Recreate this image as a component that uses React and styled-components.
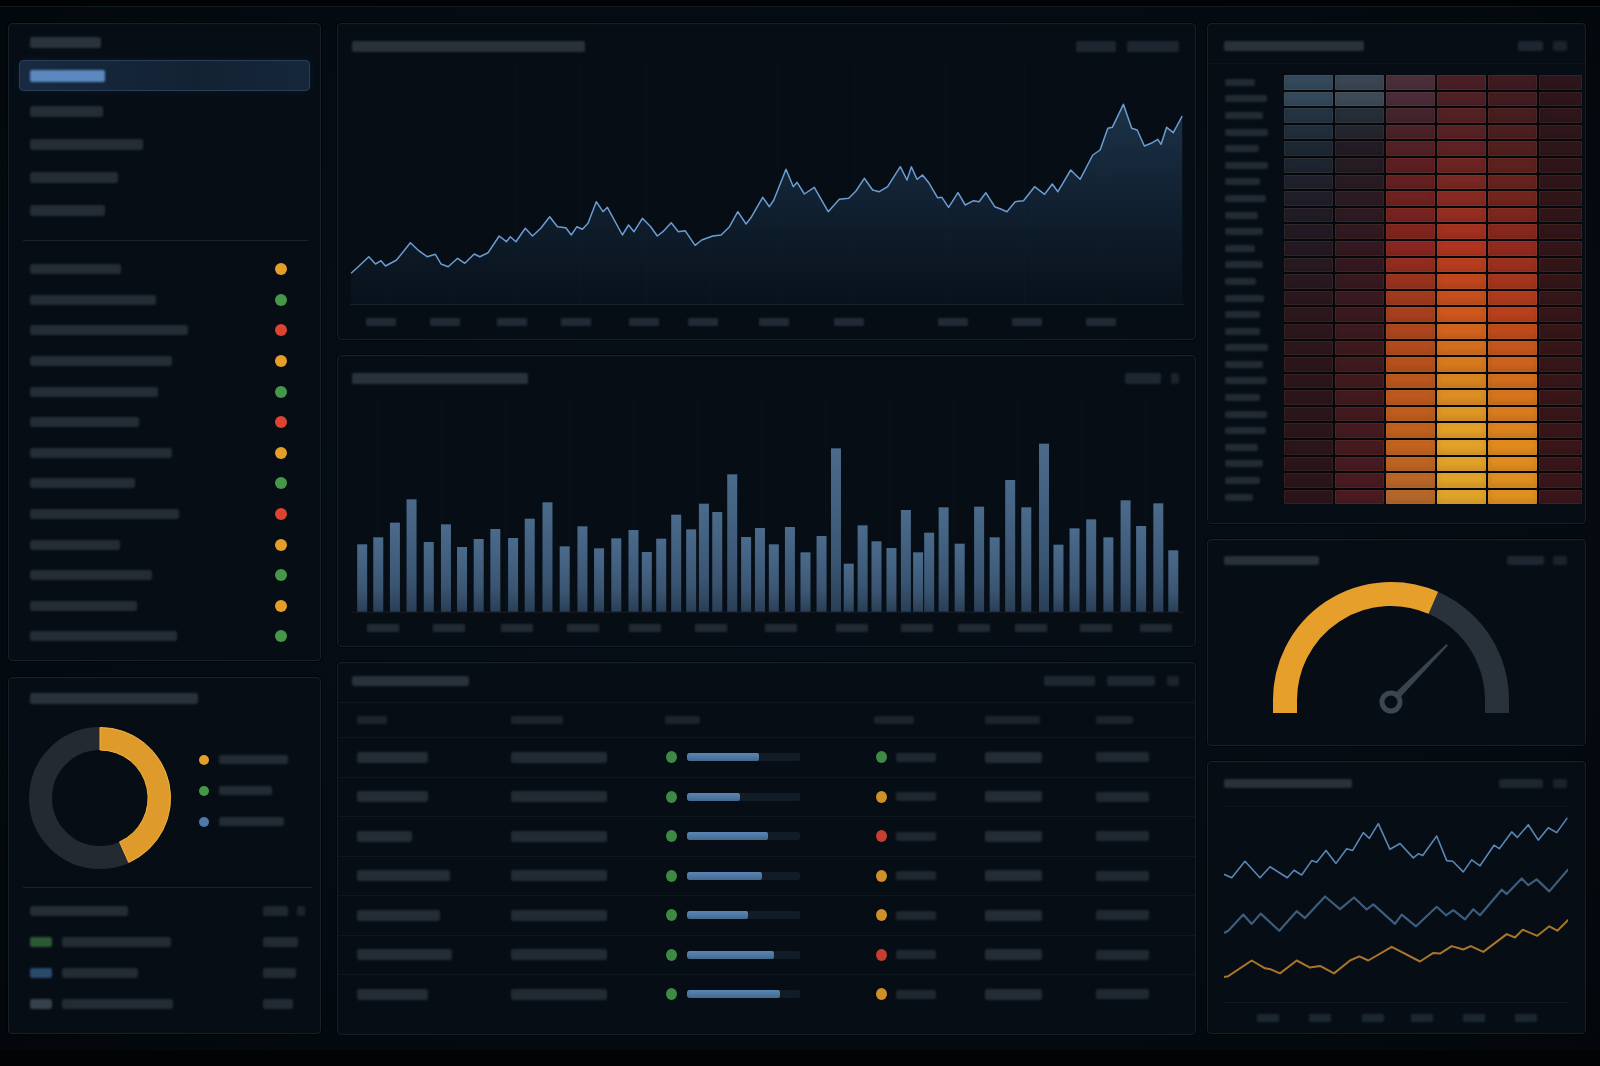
import React from "react";
import styled, { createGlobalStyle } from "styled-components";

const GlobalStyle = createGlobalStyle`
  * { box-sizing: border-box; }
  html, body { margin: 0; padding: 0; background: #010204; }
  body { font-family: "Liberation Sans", Arial, sans-serif; }
`;

// ---------- data ----------

const NAV = [73, 113, 88, 75];
const STATUS_ROWS = [
  [91, "o"], [126, "g"], [158, "r"], [142, "o"], [128, "g"], [109, "r"], [142, "o"],
  [105, "g"], [149, "r"], [90, "o"], [122, "g"], [107, "o"], [147, "g"],
];
const DOT = { o: "#e59f29", g: "#45984a", r: "#dc4432", b: "#4f78a8" };

// line chart points, sampled from the reference (chart units)
const LINE = [
  [38,790],[50,772],[70,740],[82,762],[92,752],[100,768],[120,750],[145,698],[160,722],[175,740],
  [190,733],[200,762],[213,770],[230,745],[243,760],[260,732],[270,740],[285,728],[305,678],[318,695],
  [325,680],[335,695],[352,655],[365,678],[380,655],[396,620],[410,650],[425,653],[435,675],[445,650],
  [455,658],[465,640],[480,575],[492,605],[500,592],[527,675],[538,645],[548,665],[563,625],[578,650],
  [590,678],[600,665],[615,638],[628,665],[640,662],[658,706],[670,690],[690,678],[705,675],[720,650],
  [735,605],[750,642],[760,620],[780,562],[792,590],[800,570],[822,478],[835,530],[842,517],[855,552],
  [873,532],[898,605],[918,568],[935,565],[948,543],[963,505],[978,540],[990,545],[1005,530],[1028,470],
  [1040,510],[1048,470],[1058,508],[1068,495],[1080,520],[1095,563],[1103,562],[1115,592],[1132,548],
  [1145,585],[1160,572],[1170,575],[1182,548],[1198,590],[1210,598],[1220,605],[1235,575],[1250,572],
  [1270,530],[1288,553],[1302,522],[1312,545],[1335,480],[1352,508],[1375,435],[1388,420],[1402,355],
  [1410,352],[1430,283],[1445,355],[1455,360],[1468,408],[1480,400],[1492,388],[1498,403],[1508,352],
  [1520,368],[1536,318],
];
const LINE_GRID = [100, 218, 337, 452, 570, 685, 808, 945, 1110, 1252, 1395];
const LINE_TICKS = [43, 107, 174, 238, 306, 365, 436, 511, 615, 689, 763];

const BAR_X = [
  58, 87, 117, 147, 178, 209, 238, 268, 298, 330, 360, 392, 423, 455, 485, 516, 547, 571, 597, 624,
  651, 674, 698, 725, 750, 775, 800, 829, 857, 886, 912, 935, 960, 985, 1012, 1038, 1060, 1080, 1106,
  1135, 1170, 1198, 1226, 1255, 1287, 1313, 1342, 1372, 1403, 1434, 1462, 1493, 1520,
];
const BAR_TOP = [
  583, 562, 518, 448, 576, 523, 591, 567, 537, 564, 506, 457, 589, 529, 595, 565, 540, 606, 566, 494,
  538, 461, 486, 373, 561, 534, 583, 531, 607, 558, 295, 641, 526, 574, 594, 480, 607, 548, 472, 581,
  470, 562, 390, 472, 281, 584, 535, 508, 562, 451, 528, 460, 601,
];
const BAR_TICKS = [45, 111, 179, 245, 307, 373, 443, 514, 579, 636, 693, 758, 818];

const TABLE_HEAD = [30, 52, 35, 40, 55, 37];
const TABLE_ROWS = [
  { name: 71, pct: 64, st: "g" },
  { name: 71, pct: 47, st: "o" },
  { name: 55, pct: 72, st: "r" },
  { name: 93, pct: 66, st: "o" },
  { name: 83, pct: 54, st: "o" },
  { name: 95, pct: 77, st: "r" },
  { name: 71, pct: 82, st: "o" },
];

const HEAT_LABELS = [30, 42, 38, 43, 34, 43, 35, 41, 33, 38, 30, 38, 31, 39, 35, 35, 43, 38, 42, 35, 42, 41, 33, 38, 35, 28];
const HEAT_KEYS = [
  [[0, "#34495b"], [1, "#34495b"], [2, "#243444"], [4, "#1d2833"], [8, "#211c25"], [14, "#2c171d"], [25, "#2b151b"]],
  [[0, "#3a4653"], [1, "#3d4b58"], [2, "#262e39"], [4, "#231c25"], [10, "#341920"], [16, "#3e1a1f"], [25, "#4a1b21"]],
  [[0, "#4a2f3a"], [1, "#4a2d38"], [2, "#44242d"], [5, "#5c1f22"], [10, "#8a2620"], [14, "#a8401e"], [18, "#bb561d"], [22, "#c2631f"], [25, "#b5672b"]],
  [[0, "#4a2026"], [4, "#5e2224"], [10, "#b03420"], [14, "#cf571c"], [18, "#d9851f"], [21, "#e2a027"], [25, "#e1a42a"]],
  [[0, "#3e1c21"], [4, "#52201f"], [10, "#922a1f"], [14, "#b8401c"], [18, "#d26d1d"], [22, "#e08a1e"], [25, "#df901f"]],
  [[0, "#2d161c"], [8, "#311619"], [14, "#361619"], [25, "#3a161b"]],
];

const MULTI = [
  {
    color: "#5a86b4", width: 1.6,
    pts: [[72,1010],[95,1020],[135,972],[180,1020],[210,988],[262,1020],[282,998],[305,1012],[335,970],[350,975],[378,940],[408,978],[440,935],[458,940],[490,888],[508,905],[535,862],[570,937],[600,920],[640,962],[655,950],[668,955],[710,898],[740,970],[758,972],[790,1003],[815,968],[840,985],[882,925],[898,935],[935,886],[952,902],[985,865],[1015,910],[1045,874],[1070,888],[1102,845]],
  },
  {
    color: "#3d5d7e", width: 2.2,
    pts: [[72,1182],[85,1175],[130,1128],[155,1155],[182,1125],[238,1175],[290,1118],[315,1138],[375,1075],[420,1112],[462,1078],[500,1113],[520,1098],[585,1155],[605,1128],[648,1162],[710,1105],[738,1130],[760,1115],[795,1142],[820,1112],[840,1130],[905,1055],[920,1068],[965,1022],[985,1042],[1010,1025],[1048,1060],[1105,995]],
  },
  {
    color: "#a8752a", width: 2,
    pts: [[72,1310],[85,1308],[155,1262],[195,1285],[212,1288],[240,1300],[290,1262],[330,1283],[360,1278],[402,1300],[450,1262],[478,1250],[505,1262],[575,1222],[660,1265],[700,1240],[720,1242],[755,1220],[790,1230],[812,1220],[850,1237],[920,1185],[945,1195],[968,1172],[1012,1190],[1048,1162],[1072,1175],[1105,1143]],
  },
];
const MULTI_TICKS = [44, 96, 149, 198, 250, 302];

// ---------- helpers ----------

const toRgb = (h) => [1, 3, 5].map((i) => parseInt(h.slice(i, i + 2), 16));
const heatColor = (col, row) => {
  const keys = HEAT_KEYS[col];
  let a = keys[0];
  let b = keys[keys.length - 1];
  for (let i = 0; i < keys.length - 1; i++) {
    if (row >= keys[i][0] && row <= keys[i + 1][0]) {
      a = keys[i];
      b = keys[i + 1];
      break;
    }
  }
  const t = b[0] === a[0] ? 0 : (row - a[0]) / (b[0] - a[0]);
  const ca = toRgb(a[1]);
  const cb = toRgb(b[1]);
  const c = ca.map((v, i) => Math.round(v + (cb[i] - v) * t));
  return `rgb(${c[0]}, ${c[1]}, ${c[2]})`;
};

const path = (pts, fx, fy) =>
  pts.map(([x, y], i) => `${i ? "L" : "M"}${fx(x).toFixed(1)} ${fy(y).toFixed(1)}`).join(" ");

// ---------- layout ----------

const Screen = styled.div`
  width: 1600px;
  height: 1066px;
  padding-top: 6px;
  background: #010305;
  overflow: hidden;
`;

const Frame = styled.div`
  height: 1044px;
  border-top: 1px solid #101a23;
  background: radial-gradient(ellipse at 50% 45%, #07101a 0%, #050b11 65%, #03070b 100%);
  padding: 16px 14px 0 8px;
  display: grid;
  grid-template-columns: 313px 16px 859px 11px 379px;
  align-items: start;
`;

const Column = styled.div`
  grid-column: ${(p) => p.$col};
  display: flex;
  flex-direction: column;
  gap: ${(p) => p.$gap}px;
`;

const Panel = styled.section`
  height: ${(p) => p.$h}px;
  background: #060d15;
  border: 1px solid #16212b;
  border-radius: 4px;
  overflow: hidden;
  display: flex;
  flex-direction: column;
  box-shadow: 0 0 0 1px rgba(0, 0, 0, 0.5), inset 0 1px 0 rgba(255, 255, 255, 0.015);
`;

const PanelHead = styled.header`
  display: flex;
  align-items: center;
  justify-content: space-between;
  flex-shrink: 0;
  padding: ${(p) => p.$top}px ${(p) => p.$right || 16}px 0 ${(p) => p.$left || 14}px;
`;

const HeadTools = styled.div`
  display: flex;
  align-items: center;
  gap: ${(p) => p.$gap || 10}px;
`;

const Skel = styled.span`
  display: block;
  flex-shrink: 0;
  width: ${(p) => p.$w}px;
  height: ${(p) => p.$h || 10}px;
  border-radius: 2px;
  background: ${(p) => p.$c || "#252e37"};
  filter: blur(0.9px);
`;

const Dot = styled.span`
  display: block;
  flex-shrink: 0;
  width: ${(p) => p.$s || 12}px;
  height: ${(p) => p.$s || 12}px;
  border-radius: 50%;
  background: ${(p) => DOT[p.$tone]};
`;

const Ellipse = styled.span`
  display: block;
  flex-shrink: 0;
  width: 11px;
  height: 12px;
  border-radius: 50%;
  background: ${(p) => DOT[p.$tone]};
  opacity: 0.9;
`;

// ---------- left: navigation ----------

const NavBody = styled.div`
  padding: 13px 10px 0 10px;
  display: flex;
  flex-direction: column;
`;

const NavHeading = styled.div`
  height: 11px;
  padding-left: 11px;
`;

const NavItem = styled.div`
  height: ${(p) => (p.$active ? 31 : 33)}px;
  display: flex;
  align-items: center;
  padding-left: ${(p) => (p.$active ? 10 : 11)}px;
  margin: ${(p) => (p.$active ? "12px 0 4px" : "0")};
  border-radius: 4px;
  border: ${(p) => (p.$active ? "1px solid #2b3e55" : "none")};
  background: ${(p) => (p.$active ? "linear-gradient(90deg, #172a40 0%, #132233 60%, #15273a 100%)" : "transparent")};
  box-shadow: ${(p) => (p.$active ? "0 0 10px rgba(60, 110, 170, 0.12)" : "none")};
`;

const Divider = styled.div`
  height: 1px;
  background: #19242e;
  margin: ${(p) => p.$m};
  flex-shrink: 0;
`;

const StatusList = styled.div`
  padding-top: 13px;
  display: flex;
  flex-direction: column;
`;

const StatusRow = styled.div`
  height: 30.6px;
  display: flex;
  align-items: center;
  justify-content: space-between;
  padding: 0 23px 0 11px;
`;

// ---------- left: donut ----------

const DonutRow = styled.div`
  display: flex;
  align-items: flex-start;
  padding: 23px 0 0 20px;
`;

const Legend = styled.div`
  display: flex;
  flex-direction: column;
  gap: 20px;
  padding: 27px 0 0 28px;
`;

const LegendItem = styled.div`
  display: flex;
  align-items: center;
  gap: 10px;
  height: 11px;
`;

const KeyList = styled.div`
  padding: 7px 15px 0 21px;
  display: flex;
  flex-direction: column;
`;

const KeyRow = styled.div`
  height: 31px;
  display: flex;
  align-items: center;
  justify-content: space-between;
`;

const KeyLabel = styled.div`
  display: flex;
  align-items: center;
  gap: 10px;
`;

const KeyValue = styled.div`
  width: 42px;
  display: flex;
  gap: 9px;
  align-items: center;
`;

// ---------- charts ----------

const ChartSvg = styled.svg`
  display: block;
  flex-shrink: 0;
  margin: ${(p) => p.$m || "0"};
`;

// ---------- table ----------

const TableHead = styled.div`
  height: 40px;
  flex-shrink: 0;
  border-bottom: 1px solid #0f1922;
  display: flex;
  align-items: center;
  justify-content: space-between;
  padding: 0 16px 4px 14px;
`;

const Grid = styled.div`
  display: grid;
  grid-template-columns: 154px 154px 209px 111px 111px 1fr;
  align-items: center;
  padding-left: 19px;
  height: ${(p) => p.$h}px;
  border-bottom: 1px solid ${(p) => (p.$last ? "transparent" : "#0d171f")};
  flex-shrink: 0;
`;

const Cell = styled.div`
  display: flex;
  align-items: center;
  gap: ${(p) => p.$gap || 0}px;
  padding-left: ${(p) => p.$pl || 0}px;
`;

const Track = styled.div`
  width: 113px;
  height: 8px;
  border-radius: 2px;
  background: #121c26;
  overflow: hidden;
`;

const Fill = styled.div`
  height: 100%;
  border-radius: 2px;
  background: linear-gradient(180deg, #5a86b7, #44698f);
`;

// ---------- heatmap ----------

const HeatHead = styled(PanelHead)`
  padding-bottom: 12px;
  border-bottom: 1px solid #0c151d;
`;

const HeatBody = styled.div`
  display: flex;
  padding: 11px 0 0 17px;
`;

const HeatLabels = styled.div`
  width: 59px;
  flex-shrink: 0;
  display: grid;
  grid-template-rows: repeat(26, 14.6px);
  row-gap: 2px;
  align-items: center;
`;

const HeatGrid = styled.div`
  display: grid;
  grid-template-columns: repeat(5, 49px) 43px;
  grid-template-rows: repeat(26, 14.6px);
  gap: 2px;
  background: #04080c;
`;

const HeatCell = styled.div`
  border-radius: 1px;
  box-shadow: inset 0 0 0 1px rgba(255, 210, 120, 0.07), inset 0 -3px 6px rgba(0, 0, 0, 0.12);
`;

// ---------- components ----------

function NavPanel() {
  return (
    <Panel $h={638}>
      <NavBody>
        <NavHeading>
          <Skel $w={71} $h={11} $c="#2a333c" />
        </NavHeading>
        <NavItem $active>
          <Skel $w={75} $h={12} $c="#5b88bf" />
        </NavItem>
        {NAV.map((w, i) => (
          <NavItem key={i}>
            <Skel $w={w} $h={11} $c="#242d36" />
          </NavItem>
        ))}
        <Divider $m="13px 2px 0 4px" />
        <StatusList>
          {STATUS_ROWS.map(([w, tone], i) => (
            <StatusRow key={i}>
              <Skel $w={w} $h={10} $c="#242d36" />
              <Dot $tone={tone} />
            </StatusRow>
          ))}
        </StatusList>
      </NavBody>
    </Panel>
  );
}

function DonutPanel() {
  return (
    <Panel $h={357}>
      <PanelHead $top={15} $left={21}>
        <Skel $w={168} $h={11} $c="#29323b" />
      </PanelHead>
      <DonutRow>
        <svg width="142" height="142" viewBox="0 0 142 142">
          <circle cx="71" cy="71" r="59.5" fill="none" stroke="#232a32" strokeWidth="23" />
          <path
            d="M71 0.5 A70.5 70.5 0 0 1 99.7 135.4 L90.5 114.9 A48 48 0 0 0 71 23 Z"
            fill="#df9a2c"
            stroke="#f3b23c"
            strokeWidth="1"
          />
        </svg>
        <Legend>
          <LegendItem>
            <Dot $tone="o" $s={10} />
            <Skel $w={69} $h={9} $c="#232c35" />
          </LegendItem>
          <LegendItem>
            <Dot $tone="g" $s={10} />
            <Skel $w={53} $h={9} $c="#232c35" />
          </LegendItem>
          <LegendItem>
            <Dot $tone="b" $s={10} />
            <Skel $w={65} $h={9} $c="#232c35" />
          </LegendItem>
        </Legend>
      </DonutRow>
      <Divider $m="18px 8px 0 14px" />
      <KeyList>
        <KeyRow>
          <Skel $w={98} $h={10} $c="#242d36" />
          <KeyValue>
            <Skel $w={25} $h={10} $c="#1f2831" />
            <Skel $w={8} $h={10} $c="#1c242d" />
          </KeyValue>
        </KeyRow>
        {[
          ["#2b5a33", 109, 35],
          ["#2a4a6c", 76, 33],
          ["#37414b", 111, 30],
        ].map(([c, w, v], i) => (
          <KeyRow key={i}>
            <KeyLabel>
              <Skel $w={22} $h={10} $c={c} />
              <Skel $w={w} $h={10} $c="#232c35" />
            </KeyLabel>
            <KeyValue>
              <Skel $w={v} $h={10} $c="#222b34" />
            </KeyValue>
          </KeyRow>
        ))}
      </KeyList>
    </Panel>
  );
}

function TrendPanel() {
  const fx = (x) => x * 0.5548 - 8;
  const fy = (y) => y / 3 - 46;
  const line = path(LINE, fx, fy);
  const last = LINE[LINE.length - 1];
  const area = `${line} L${fx(last[0]).toFixed(1)} 248 L${fx(LINE[0][0]).toFixed(1)} 248 Z`;
  return (
    <Panel $h={317}>
      <PanelHead $top={17}>
        <Skel $w={233} $h={11} $c="#29323b" />
        <HeadTools $gap={11}>
          <Skel $w={40} $h={11} $c="#1e2731" />
          <Skel $w={52} $h={11} $c="#1e2731" />
        </HeadTools>
      </PanelHead>
      <ChartSvg width="857" height="275" viewBox="0 0 857 275" $m="4px 0 0">
        <defs>
          <linearGradient id="trendFill" x1="0" y1="0" x2="0" y2="1">
            <stop offset="0" stopColor="#3c6690" stopOpacity="0.42" />
            <stop offset="0.55" stopColor="#203c58" stopOpacity="0.38" />
            <stop offset="1" stopColor="#10202f" stopOpacity="0.25" />
          </linearGradient>
          <filter id="soft">
            <feGaussianBlur stdDeviation="0.9" />
          </filter>
        </defs>
        {LINE_GRID.map((x) => (
          <line key={x} x1={fx(x)} x2={fx(x)} y1="6" y2="248" stroke="#0a131b" strokeWidth="1" />
        ))}
        <line x1="12" x2="846" y1="248.5" y2="248.5" stroke="#14202b" strokeWidth="1" />
        <path d={area} fill="url(#trendFill)" />
        <path d={line} fill="none" stroke="#6c9dd2" strokeWidth="1.5" strokeLinejoin="round" />
        <g filter="url(#soft)">
          {LINE_TICKS.map((x) => (
            <rect key={x} x={x - 15} y="262" width="30" height="8" rx="1" fill="#232c35" />
          ))}
        </g>
      </ChartSvg>
    </Panel>
  );
}

function VolumePanel() {
  const fx = (x) => x * 0.5548 - 8;
  const fy = (y) => y / 3 - 40;
  const base = fy(785);
  return (
    <Panel $h={292}>
      <PanelHead $top={17}>
        <Skel $w={176} $h={11} $c="#29323b" />
        <HeadTools $gap={10}>
          <Skel $w={36} $h={11} $c="#1e2731" />
          <Skel $w={8} $h={11} $c="#1b232c" />
        </HeadTools>
      </PanelHead>
      <ChartSvg width="857" height="250" viewBox="0 0 857 250" $m="6px 0 0">
        <defs>
          <linearGradient id="barFill" x1="0" y1="0" x2="0" y2="1">
            <stop offset="0" stopColor="#4b6b8c" />
            <stop offset="0.7" stopColor="#3a5572" />
            <stop offset="1" stopColor="#2a3f55" />
          </linearGradient>
          <filter id="soft2">
            <feGaussianBlur stdDeviation="0.9" />
          </filter>
        </defs>
        {Array.from({ length: 13 }, (_, i) => 40 + i * 64).map((x) => (
          <line key={x} x1={x} x2={x} y1="6" y2={base} stroke="#09121a" strokeWidth="1" />
        ))}
        <line x1="14" x2="846" y1={base + 0.5} y2={base + 0.5} stroke="#15212c" strokeWidth="1" />
        {BAR_X.map((x, i) => (
          <rect
            key={x}
            x={fx(x) - 5}
            y={fy(BAR_TOP[i])}
            width="10"
            height={base - fy(BAR_TOP[i])}
            fill="url(#barFill)"
          />
        ))}
        <g filter="url(#soft2)">
          {BAR_TICKS.map((x) => (
            <rect key={x} x={x - 16} y="234" width="32" height="8" rx="1" fill="#232c35" />
          ))}
        </g>
      </ChartSvg>
    </Panel>
  );
}

function TablePanel() {
  return (
    <Panel $h={373}>
      <TableHead>
        <Skel $w={117} $h={10} $c="#29323b" />
        <HeadTools $gap={12}>
          <Skel $w={51} $h={10} $c="#1e2731" />
          <Skel $w={48} $h={10} $c="#1e2731" />
          <Skel $w={12} $h={10} $c="#1b232c" />
        </HeadTools>
      </TableHead>
      <Grid $h={35}>
        {TABLE_HEAD.map((w, i) => (
          <Cell key={i}>
            <Skel $w={w} $h={8} $c="#1c252e" />
          </Cell>
        ))}
      </Grid>
      {TABLE_ROWS.map((r, i) => (
        <Grid key={i} $h={39.5} $last={i === TABLE_ROWS.length - 1}>
          <Cell>
            <Skel $w={r.name} $h={11} $c="#242d36" />
          </Cell>
          <Cell>
            <Skel $w={96} $h={11} $c="#222b34" />
          </Cell>
          <Cell $gap={10} $pl={1}>
            <Ellipse $tone="g" />
            <Track>
              <Fill style={{ width: `${r.pct}%` }} />
            </Track>
          </Cell>
          <Cell $gap={9} $pl={2}>
            <Ellipse $tone={r.st} />
            <Skel $w={40} $h={9} $c="#1f2831" />
          </Cell>
          <Cell>
            <Skel $w={57} $h={11} $c="#242d36" />
          </Cell>
          <Cell>
            <Skel $w={53} $h={10} $c="#202932" />
          </Cell>
        </Grid>
      ))}
    </Panel>
  );
}

function HeatPanel() {
  return (
    <Panel $h={501}>
      <HeatHead $top={17} $left={16} $right={18}>
        <Skel $w={140} $h={10} $c="#29323b" />
        <HeadTools $gap={10}>
          <Skel $w={25} $h={10} $c="#1e2731" />
          <Skel $w={14} $h={10} $c="#1b232c" />
        </HeadTools>
      </HeatHead>
      <HeatBody>
        <HeatLabels>
          {HEAT_LABELS.map((w, i) => (
            <Skel key={i} $w={w} $h={7} $c="#222b34" />
          ))}
        </HeatLabels>
        <HeatGrid>
          {HEAT_LABELS.map((_, row) =>
            HEAT_KEYS.map((__, col) => (
              <HeatCell key={`${row}-${col}`} style={{ background: heatColor(col, row) }} />
            ))
          )}
        </HeatGrid>
      </HeatBody>
    </Panel>
  );
}

function GaugePanel() {
  return (
    <Panel $h={207}>
      <PanelHead $top={16} $left={16} $right={18}>
        <Skel $w={95} $h={9} $c="#29323b" />
        <HeadTools $gap={9}>
          <Skel $w={37} $h={9} $c="#1e2731" />
          <Skel $w={14} $h={9} $c="#1b232c" />
        </HeadTools>
      </PanelHead>
      <ChartSvg width="250" height="142" viewBox="0 0 250 142" $m="10px 0 0 58px">
        <path
          d="M19 138 L19 125 A106 106 0 0 1 231 125 L231 138"
          fill="none"
          stroke="#29313a"
          strokeWidth="24"
        />
        <path
          d="M19 138 L19 125 A106 106 0 0 1 167.3 27.8"
          fill="none"
          stroke="#e69f2b"
          strokeWidth="24"
        />
        <polygon points="122.4,124.4 127.6,129.6 182,70.6 180.4,69" fill="#37434f" />
        <circle cx="125" cy="127" r="9" fill="#060d15" stroke="#3a4652" strokeWidth="5" />
      </ChartSvg>
    </Panel>
  );
}

function MultiPanel() {
  const fx = (x) => x / 3 - 24;
  const fy = (y) => y / 2.925 - 270;
  return (
    <Panel $h={273}>
      <PanelHead $top={17} $left={16} $right={18}>
        <Skel $w={128} $h={9} $c="#29323b" />
        <HeadTools $gap={10}>
          <Skel $w={44} $h={9} $c="#1e2731" />
          <Skel $w={14} $h={9} $c="#1b232c" />
        </HeadTools>
      </PanelHead>
      <ChartSvg width="344" height="228" viewBox="0 0 344 228" $m="11px 0 0 16px">
        <defs>
          <filter id="soft3">
            <feGaussianBlur stdDeviation="0.9" />
          </filter>
        </defs>
        <line x1="0" x2="344" y1="7.5" y2="7.5" stroke="#0b141c" />
        <line x1="0" x2="344" y1="203.5" y2="203.5" stroke="#0f1a23" />
        {MULTI.map((s) => (
          <path
            key={s.color}
            d={path(s.pts, fx, fy)}
            fill="none"
            stroke={s.color}
            strokeWidth={s.width}
            strokeLinejoin="round"
          />
        ))}
        <g filter="url(#soft3)">
          {MULTI_TICKS.map((x) => (
            <rect key={x} x={x - 11} y="215" width="22" height="8" rx="1" fill="#1f2831" />
          ))}
        </g>
      </ChartSvg>
    </Panel>
  );
}

export default function App() {
  return (
    <>
      <GlobalStyle />
      <Screen>
        <Frame>
          <Column $col={1} $gap={16}>
            <NavPanel />
            <DonutPanel />
          </Column>
          <Column $col={3} $gap={15}>
            <TrendPanel />
            <VolumePanel />
            <TablePanel />
          </Column>
          <Column $col={5} $gap={15}>
            <HeatPanel />
            <GaugePanel />
            <MultiPanel />
          </Column>
        </Frame>
      </Screen>
    </>
  );
}
